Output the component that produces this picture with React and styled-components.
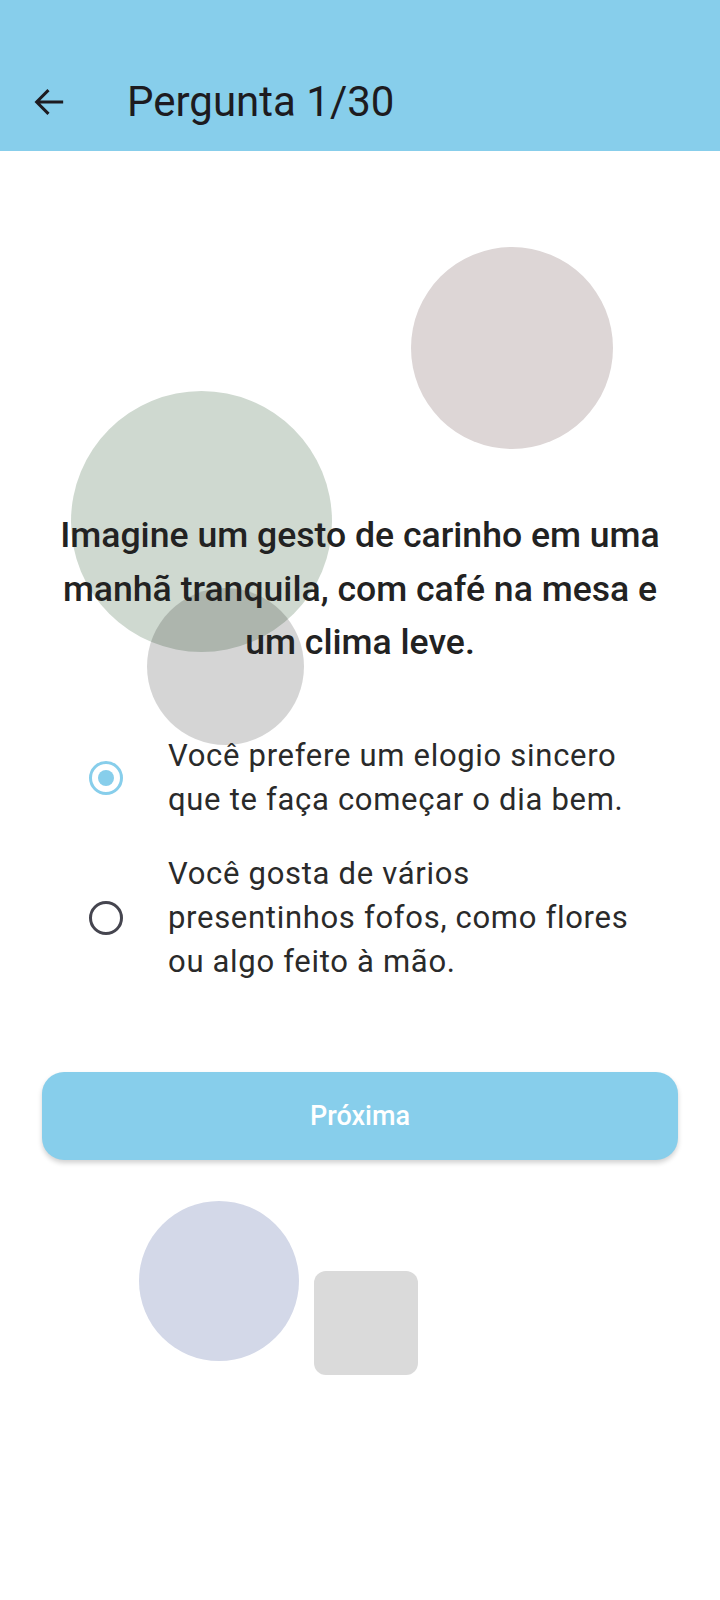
import React from 'react';
import styled, { createGlobalStyle } from 'styled-components';

const GlobalStyle = createGlobalStyle`
  html, body {
    margin: 0;
    padding: 0;
    background: #FFFFFF;
  }
  body {
    font-family: Roboto, "Noto Sans", "Liberation Sans", sans-serif;
  }
  * {
    box-sizing: border-box;
  }
`;

const OPTIONS = [
  { id: 1, text: 'Você prefere um elogio sincero que te faça começar o dia bem.' },
  { id: 2, text: 'Você gosta de vários presentinhos fofos, como flores ou algo feito à mão.' },
];

const SHAPES = [
  { key: 'rose', left: 411, top: 96, size: 202, color: '#DDD6D6' },
  { key: 'sage', left: 71, top: 240, size: 261, color: '#CFD9D0' },
  { key: 'ash', left: 147, top: 437, size: 157, color: 'rgba(0, 0, 0, 0.165)' },
  { key: 'lilac', left: 139, top: 1050, size: 160, color: '#D3D8E8' },
  { key: 'block', left: 314, top: 1120, size: 104, color: '#DADADA', square: true },
];

function ArrowBack () {
  return (
    <svg width="38" height="38" viewBox="0 0 24 24" fill="none">
      <path d="M20 12H4.8M11 5.2l-6.8 6.8 6.8 6.8" stroke="#1D1B20" strokeWidth="1.9" strokeLinecap="square" />
    </svg>
  );
}

export default function App () {
  const [selected, setSelected] = React.useState(1);

  return (
    <Page>
      <GlobalStyle />

      <Header>
        <BackButton aria-label="Voltar">
          <ArrowBack />
        </BackButton>
        <Title>Pergunta 1/30</Title>
      </Header>

      <Main>
        {SHAPES.map(shape => (
          <Shape
            key={shape.key}
            $size={shape.size}
            $color={shape.color}
            $square={shape.square}
            style={{ left: shape.left, top: shape.top }}
          />
        ))}

        <Content>
          <Question>
            Imagine um gesto de carinho em uma manhã tranquila, com café na mesa e um clima leve.
          </Question>

          <OptionList>
            {OPTIONS.map(option => (
              <OptionRow key={option.id} onClick={() => setSelected(option.id)}>
                <Radio $active={selected === option.id} />
                <OptionText>{option.text}</OptionText>
              </OptionRow>
            ))}
          </OptionList>

          <NextButton>Próxima</NextButton>
        </Content>
      </Main>
    </Page>
  );
}

const Page = styled.div`
  width: 720px;
  min-height: 1600px;
  background: #FFFFFF;
  display: flex;
  flex-direction: column;
`;

const Header = styled.header`
  height: 151px;
  background: #87CEEB;
  display: flex;
  align-items: center;
  padding: 52px 0 0 30px;
  column-gap: 59px;
`;

const BackButton = styled.button`
  width: 38px;
  height: 38px;
  padding: 0;
  border: none;
  background: transparent;
  display: flex;
  align-items: center;
  justify-content: center;
  cursor: pointer;
`;

const Title = styled.h1`
  margin: 0;
  font-family: Roboto, sans-serif;
  font-size: 42px;
  font-weight: 400;
  color: #1D1B20;
  letter-spacing: 0;
`;

const Main = styled.main`
  position: relative;
  flex: 1;
`;

const Shape = styled.div`
  position: absolute;
  width: ${props => props.$size}px;
  height: ${props => props.$size}px;
  border-radius: ${props => (props.$square ? '12px' : '50%')};
  background: ${props => props.$color};
`;

const Content = styled.div`
  position: relative;
  display: flex;
  flex-direction: column;
  padding: 358px 42px 0;
`;

const Question = styled.p`
  margin: 0 auto;
  width: 624px;
  text-align: center;
  font-family: Roboto, sans-serif;
  font-size: 35.6px;
  font-weight: 500;
  line-height: 53.5px;
  color: #222222;
`;

const OptionList = styled.div`
  display: flex;
  flex-direction: column;
  row-gap: 30px;
  margin-top: 64px;
  padding: 0 30px 0 47px;
`;

const OptionRow = styled.label`
  display: flex;
  align-items: center;
  column-gap: 45px;
  cursor: pointer;
`;

const Radio = styled.span`
  flex: none;
  width: 34px;
  height: 34px;
  border-radius: 50%;
  border: 3.5px solid ${props => (props.$active ? '#87CEEB' : '#45454F')};
  display: flex;
  align-items: center;
  justify-content: center;

  &::after {
    content: '';
    width: 16px;
    height: 16px;
    border-radius: 50%;
    background: #87CEEB;
    display: ${props => (props.$active ? 'block' : 'none')};
  }
`;

const OptionText = styled.span`
  flex: 1;
  font-family: Roboto, sans-serif;
  font-size: 31px;
  font-weight: 400;
  line-height: 44px;
  letter-spacing: 0.7px;
  color: #2A2A2A;
`;

const NextButton = styled.button`
  margin-top: 88px;
  height: 88px;
  border: none;
  border-radius: 22px;
  background: #87CEEB;
  box-shadow: 0 3px 5px rgba(0, 0, 0, 0.18);
  color: #FFFFFF;
  font-family: Roboto, sans-serif;
  font-size: 27px;
  font-weight: 500;
  cursor: pointer;
`;
